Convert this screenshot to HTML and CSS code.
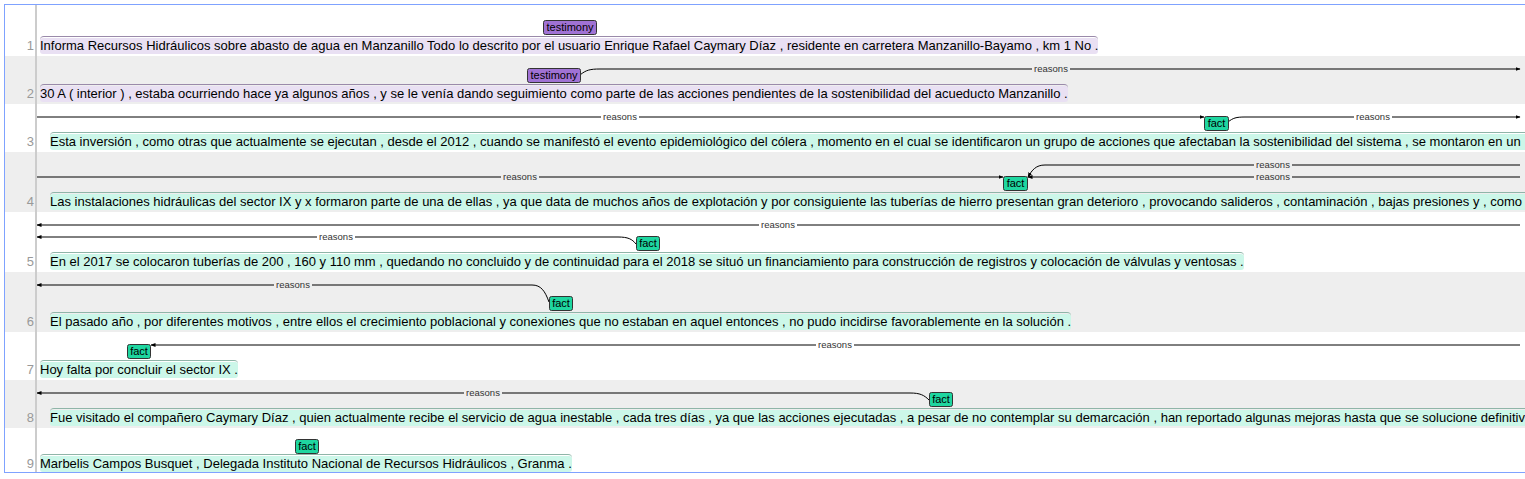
FILE: index.html
```html
<!DOCTYPE html>
<html lang="es">
<head>
<meta charset="utf-8">
<title>brat</title>
<link rel="stylesheet" href="styles.css">
</head>
<body>
<div class="viz">
  <div class="row white h51"><div class="ln">1</div><div class="content"><span class="span testimony">Informa Recursos Hidráulicos sobre abasto de agua en Manzanillo Todo lo descrito por el usuario Enrique Rafael Caymary Díaz , residente en carretera Manzanillo-Bayamo , km 1 No .</span></div></div>
  <div class="row gray h48"><div class="ln">2</div><div class="content"><span class="span testimony">30 A ( interior ) , estaba ocurriendo hace ya algunos años , y se le venía dando seguimiento como parte de las acciones pendientes de la sostenibilidad del acueducto Manzanillo .</span></div></div>
  <div class="row white h48"><div class="ln">3</div><div class="content indent"><span class="span fact open">Esta inversión , como otras que actualmente se ejecutan , desde el 2012 , cuando se manifestó el evento epidemiológico del cólera , momento en el cual se identificaron un grupo de acciones que afectaban la sostenibilidad del sistema , se montaron en un</span></div></div>
  <div class="row gray h60"><div class="ln">4</div><div class="content indent"><span class="span fact open">Las instalaciones hidráulicas del sector IX y x formaron parte de una de ellas , ya que data de muchos años de explotación y por consiguiente las tuberías de hierro presentan gran deterioro , provocando salideros , contaminación , bajas presiones y , como</span></div></div>
  <div class="row white h60"><div class="ln">5</div><div class="content indent"><span class="span fact">En el 2017 se colocaron tuberías de 200 , 160 y 110 mm , quedando no concluido y de continuidad para el 2018 se situó un financiamiento para construcción de registros y colocación de válvulas y ventosas .</span></div></div>
  <div class="row gray h60"><div class="ln">6</div><div class="content indent"><span class="span fact">El pasado año , por diferentes motivos , entre ellos el crecimiento poblacional y conexiones que no estaban en aquel entonces , no pudo incidirse favorablemente en la solución .</span></div></div>
  <div class="row white h48"><div class="ln">7</div><div class="content"><span class="span fact">Hoy falta por concluir el sector IX .</span></div></div>
  <div class="row gray h48"><div class="ln">8</div><div class="content indent"><span class="span fact open">Fue visitado el compañero Caymary Díaz , quien actualmente recibe el servicio de agua inestable , cada tres días , ya que las acciones ejecutadas , a pesar de no contemplar su demarcación , han reportado algunas mejoras hasta que se solucione definitiv</span></div></div>
  <div class="row white h44 last"><div class="ln">9</div><div class="content"><span class="span fact">Marbelis Campos Busquet , Delegada Instituto Nacional de Recursos Hidráulicos , Granma .</span></div></div>

  <svg class="overlay" width="1525" height="479" viewBox="0 0 1525 479" xmlns="http://www.w3.org/2000/svg">
    <defs>
      <marker id="ah" viewBox="0 0 10 10" refX="9" refY="5" markerWidth="5" markerHeight="5" orient="auto" markerUnits="userSpaceOnUse">
        <path d="M0,1 L10,5 L0,9 Z" fill="#000"/>
      </marker>
    </defs>

    <!-- row 2 -->
    <path class="arc" d="M580,75 C586,70 590,69 600,69 L1520,69" marker-end="url(#ah)"/>
    <rect class="bg-gray" x="1032" y="64" width="38" height="10"/>
    <text class="arclabel" x="1051" y="72">reasons</text>

    <!-- row 3 -->
    <path class="arc" d="M37,117 L1204,117" marker-end="url(#ah)"/>
    <rect class="bg-white" x="601" y="112" width="38" height="10"/>
    <text class="arclabel" x="620" y="120">reasons</text>
    <path class="arc" d="M1228,122 C1233,118 1236,117 1245,117 L1520,117" marker-end="url(#ah)"/>
    <rect class="bg-white" x="1354" y="112" width="38" height="10"/>
    <text class="arclabel" x="1373" y="120">reasons</text>

    <!-- row 4 -->
    <path class="arc" d="M37,177 L1003,177" marker-end="url(#ah)"/>
    <rect class="bg-gray" x="501" y="172" width="38" height="10"/>
    <text class="arclabel" x="520" y="180">reasons</text>
    <path class="arc" d="M1520,177 L1028,177" marker-end="url(#ah)"/>
    <path class="arc" d="M1520,165 L1045,165 C1036,165 1032,170 1028,177" marker-end="url(#ah)"/>
    <rect class="bg-gray" x="1254" y="160" width="38" height="22"/>
    <text class="arclabel" x="1273" y="168">reasons</text>
    <text class="arclabel" x="1273" y="180">reasons</text>

    <!-- row 5 -->
    <path class="arc" d="M1520,225 L37,225" marker-end="url(#ah)"/>
    <rect class="bg-white" x="759" y="220" width="38" height="10"/>
    <text class="arclabel" x="778" y="228">reasons</text>
    <path class="arc" d="M636,244 C632,239 628,237 618,237 L37,237" marker-end="url(#ah)"/>
    <rect class="bg-white" x="317" y="232" width="38" height="10"/>
    <text class="arclabel" x="336" y="240">reasons</text>

    <!-- row 6 -->
    <path class="arc" d="M549,302 C545,291 541,285 532,285 L37,285" marker-end="url(#ah)"/>
    <rect class="bg-gray" x="274" y="280" width="38" height="10"/>
    <text class="arclabel" x="293" y="288">reasons</text>

    <!-- row 7 -->
    <path class="arc" d="M1520,345 L151,345" marker-end="url(#ah)"/>
    <rect class="bg-white" x="816" y="340" width="38" height="10"/>
    <text class="arclabel" x="835" y="348">reasons</text>

    <!-- row 8 -->
    <path class="arc" d="M929,400 C924,395 920,393 910,393 L37,393" marker-end="url(#ah)"/>
    <rect class="bg-gray" x="464" y="388" width="38" height="10"/>
    <text class="arclabel" x="483" y="396">reasons</text>

    <!-- span labels -->
    <rect class="lbl-testimony" x="543.5" y="20.5" width="53" height="14" rx="2"/>
    <text class="lbltext" x="570" y="31">testimony</text>
    <rect class="lbl-testimony" x="527.5" y="68.5" width="53" height="14" rx="2"/>
    <text class="lbltext" x="554" y="79">testimony</text>

    <rect class="lbl-fact" x="1204.5" y="116.5" width="24" height="14" rx="2"/>
    <text class="lbltext" x="1216.5" y="127">fact</text>
    <rect class="lbl-fact" x="1003.5" y="176.5" width="24" height="14" rx="2"/>
    <text class="lbltext" x="1015.5" y="187">fact</text>
    <rect class="lbl-fact" x="636.5" y="236.5" width="23" height="14" rx="2"/>
    <text class="lbltext" x="648" y="247">fact</text>
    <rect class="lbl-fact" x="549.5" y="296.5" width="23" height="14" rx="2"/>
    <text class="lbltext" x="561" y="307">fact</text>
    <rect class="lbl-fact" x="127.5" y="344.5" width="23" height="14" rx="2"/>
    <text class="lbltext" x="139" y="355">fact</text>
    <rect class="lbl-fact" x="929.5" y="392.5" width="23" height="14" rx="2"/>
    <text class="lbltext" x="941" y="403">fact</text>
    <rect class="lbl-fact" x="295.5" y="439.5" width="23" height="14" rx="2"/>
    <text class="lbltext" x="307" y="450">fact</text>
  </svg>
</div>
</body>
</html>
```

FILE: styles.css
```css
html, body {
  margin: 0;
  padding: 0;
  overflow: hidden;
  background: #fff;
}

body {
  width: 1525px;
  height: 479px;
  font-family: "Liberation Sans", Arial, sans-serif;
}

.viz {
  position: relative;
  margin: 4px 0 0 4px;
  width: 1700px;
  border-top: 1px solid #7fa2ff;
  border-left: 1px solid #7fa2ff;
  border-bottom: 1px solid #7fa2ff;
}

.row {
  display: flex;
  align-items: stretch;
}

.white { background: #fff; }
.gray { background: #eeeeee; }

.h51 { height: 51px; }
.h48 { height: 48px; }
.h60 { height: 60px; }
.h44 { height: 44px; }

.ln {
  width: 29px;
  flex: none;
  border-right: 2px solid #cccccc;
  box-sizing: content-box;
  display: flex;
  align-items: flex-end;
  justify-content: flex-end;
  padding: 0 1px 2px 0;
  font-size: 13px;
  line-height: 16px;
  color: #999;
}

.content {
  flex: 1;
  display: flex;
  align-items: flex-end;
  padding: 0 0 2px 3px;
  white-space: nowrap;
  font-size: 13px;
  line-height: 16px;
  color: #000;
}

.last .content,
.last .ln {
  padding-bottom: 0;
}

.content.indent {
  padding-left: 13px;
}

.span {
  position: relative;
  display: inline-block;
  border-radius: 3px;
}

.span::before {
  content: "";
  position: absolute;
  left: 0;
  right: 0;
  top: -2px;
  height: 4px;
  border-top: 1px solid;
  border-radius: 4px 4px 0 0;
}

.testimony { background: #e9e0f3; }
.testimony::before { border-color: #9a8aaa; }

.fact { background: #ccf7e9; }
.fact::before { border-color: #8fb5a8; }

.open { padding-right: 300px; }

.overlay {
  position: absolute;
  left: -5px;
  top: -5px;
  overflow: visible;
  pointer-events: none;
}

.arc {
  fill: none;
  stroke: #000;
  stroke-width: 1;
}

.bg-white { fill: #fff; }
.bg-gray { fill: #eeeeee; }

.arclabel {
  font-family: "Liberation Sans", Arial, sans-serif;
  font-size: 9.5px;
  fill: #333;
  text-anchor: middle;
}

.lbl-testimony {
  fill: #a072d4;
  stroke: #333;
  stroke-width: 1;
}

.lbl-fact {
  fill: #1fd6a0;
  stroke: #333;
  stroke-width: 1;
}

.lbltext {
  font-family: "Liberation Sans", Arial, sans-serif;
  font-size: 11px;
  fill: #000;
  text-anchor: middle;
}
```
